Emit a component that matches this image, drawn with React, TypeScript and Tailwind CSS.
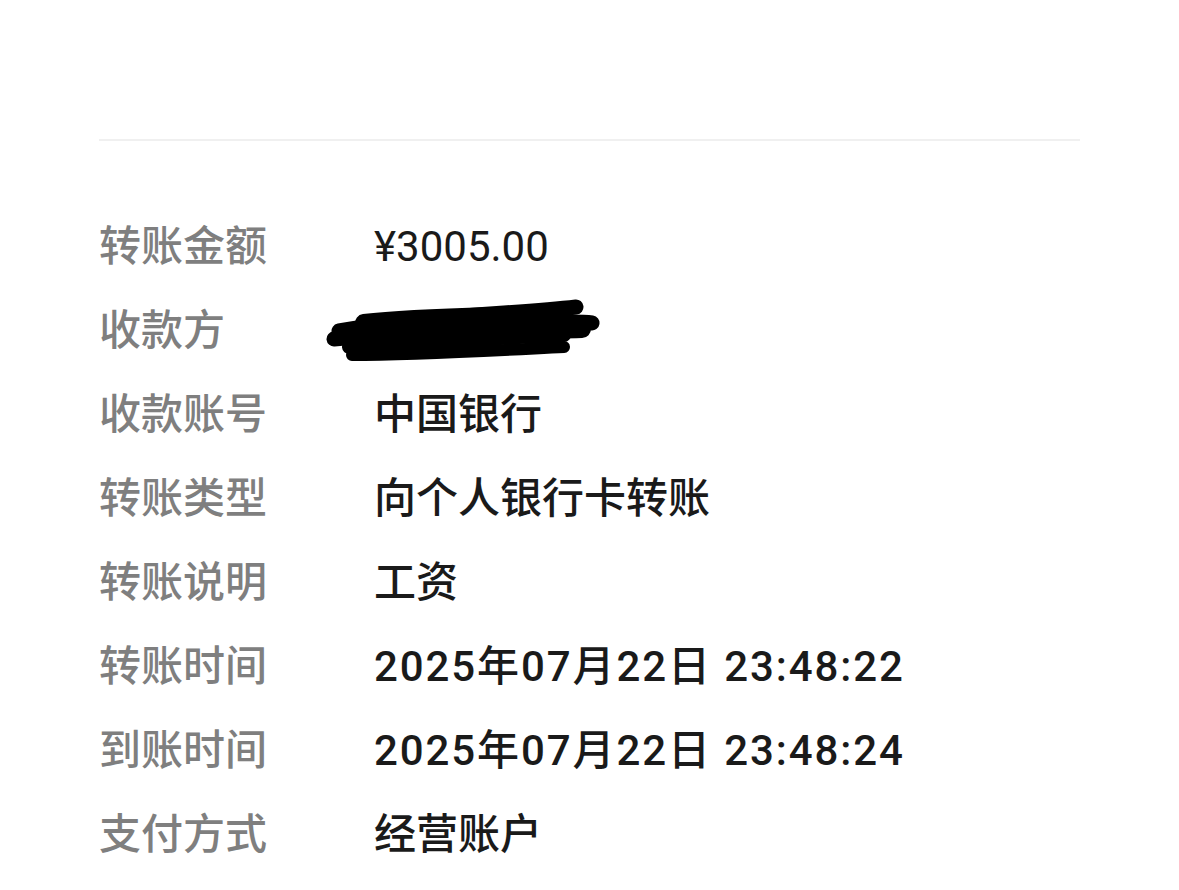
import React from 'react';

const Scribble: React.FC = () => (
    <svg width="280" height="70" viewBox="0 0 280 70" className="block">
        <g fill="none" stroke="#000" strokeLinecap="round" strokeLinejoin="round">
            <path d="M15 38 C60 30 120 24 180 20 C210 18 235 16 252 14" strokeWidth="15" />
            <path d="M10 46 C70 40 140 32 200 30 C230 29 255 28 268 30" strokeWidth="15" />
            <path d="M40 30 C90 24 150 24 210 22" strokeWidth="18" />
            <path d="M25 54 C80 50 150 46 240 42" strokeWidth="14" />
            <path d="M28 62 C90 62 160 58 240 54" strokeWidth="12" />
            <path d="M50 40 C110 40 170 38 258 36" strokeWidth="18" />
        </g>
    </svg>
);

const rows: { label: string; value: React.ReactNode; cls?: string }[] = [
    { label: '转账金额', value: '¥3005.00', cls: 'font-normal' },
    { label: '收款方', value: <Scribble /> },
    { label: '收款账号', value: '中国银行' },
    { label: '转账类型', value: '向个人银行卡转账' },
    { label: '转账说明', value: '工资' },
    { label: '转账时间', value: '2025年07月22日 23:48:22', cls: 'font-medium tracking-[1.9px]' },
    { label: '到账时间', value: '2025年07月22日 23:48:24', cls: 'font-medium tracking-[1.9px]' },
    { label: '支付方式', value: '经营账户' },
];

const App: React.FC = () => {
    return (
        <div
            className="w-[1179px] h-[890px] bg-white overflow-hidden"
            style={{ fontFamily: 'Roboto, "Noto Sans CJK SC", sans-serif' }}
        >
            <div className="px-[99px] pt-[139px]">
                <div className="h-[2px] bg-[#f0f0f0]" />
                {/* detail rows */}
                <div className="pt-[64px] flex flex-col">
                    {rows.map((r) => (
                        <div key={r.label} className="flex items-center h-[84px] text-[42px] leading-none">
                            <span className="w-[275px] text-[#7f7f7f] font-medium">{r.label}</span>
                            {typeof r.value === 'string' ? (
                                <span className={`text-[#1a1a1a] ${r.cls ?? 'font-medium'}`}>{r.value}</span>
                            ) : (
                                <span className="-ml-[50px] mt-[-6px]">{r.value}</span>
                            )}
                        </div>
                    ))}
                </div>
            </div>
        </div>
    );
};

export default App;
